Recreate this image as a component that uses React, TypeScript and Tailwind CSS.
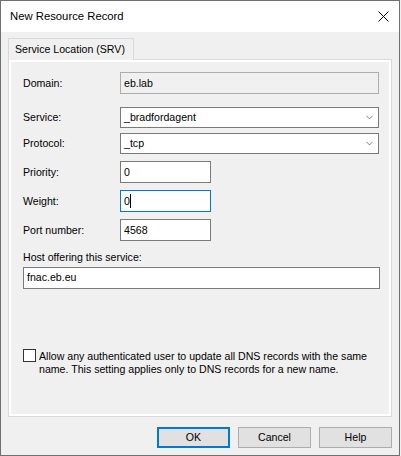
import { ChevronDown } from 'lucide-react';

const font = { fontFamily: '"Liberation Sans", Arial, sans-serif' };

function Edit({ value, width, focused, readOnly, caret }: { value: string; width: string; focused?: boolean; readOnly?: boolean; caret?: boolean }) {
  return (
    <div
      className={`h-[22px] ${width} border flex items-center pl-[3px] ${
        focused ? 'border-[#0078d7]' : 'border-[#7a7a7a]'
      } ${readOnly ? 'bg-[#f0f0f0] border-[#adadad]' : 'bg-white'}`}
    >
      <span>{value}</span>
      {caret && <span className="w-px h-[14px] bg-black" />}
    </div>
  );
}

function Combo({ value }: { value: string }) {
  return (
    <div className="h-[21px] w-[259px] border border-[#7a7a7a] bg-white flex items-center justify-between pl-[3px] pr-[3px]">
      <span>{value}</span>
      <ChevronDown className="w-[11px] h-[11px] text-[#444]" strokeWidth={1.5} />
    </div>
  );
}

function Row({ label, children, className }: { label: string; children: React.ReactNode; className?: string }) {
  return (
    <div className={`flex items-center ${className ?? ''}`}>
      <span className="w-[97px]">{label}</span>
      {children}
    </div>
  );
}

function Button({ label, primary }: { label: string; primary?: boolean }) {
  return (
    <div
      className={`w-[73px] h-[21px] flex items-center justify-center bg-[#e1e1e1] ${
        primary ? 'border-2 border-[#0078d7]' : 'border border-[#adadad]'
      }`}
    >
      {label}
    </div>
  );
}

export default function App() {
  return (
    <div className="w-[401px] h-[456px] bg-[#f0f0f0] text-[10.6px] text-black leading-none" style={font}>
      <div className="w-[400px] h-[456px] border border-[#707070] flex flex-col bg-[#f0f0f0]">
        <div className="h-[31px] bg-white flex items-center justify-between pl-[9px] pr-[10px] text-[11.3px]">
          <span>New Resource Record</span>
          <svg width="11" height="11" viewBox="0 0 11 11" className="text-black">
            <path d="M0.5 0.5 L10.5 10.5 M10.5 0.5 L0.5 10.5" stroke="currentColor" strokeWidth="1" />
          </svg>
        </div>

        <div className="px-[7px] pt-[6px] flex flex-col">
          <div className="w-[126px] h-[22px] border border-b-0 border-[#d9d9d9] bg-[#f0f0f0] flex items-center pl-[6px] -mb-px relative z-10">
            Service Location (SRV)
          </div>
          <div className="h-[358px] w-[384px] border border-[#d9d9d9] flex">
            <div className="flex-1 border-2 border-white flex flex-col pl-[12px]">
              <Row label="Domain:" className="mt-[10px]">
                <Edit value="eb.lab" width="w-[259px]" readOnly />
              </Row>
              <Row label="Service:" className="mt-[13px]">
                <Combo value="_bradfordagent" />
              </Row>
              <Row label="Protocol:" className="mt-[5px]">
                <Combo value="_tcp" />
              </Row>
              <Row label="Priority:" className="mt-[7px]">
                <Edit value="0" width="w-[91px]" />
              </Row>
              <Row label="Weight:" className="mt-[7px]">
                <Edit value="0" width="w-[91px]" focused caret />
              </Row>
              <Row label="Port number:" className="mt-[7px]">
                <Edit value="4568" width="w-[91px]" />
              </Row>
              <span className="mt-[11px]">Host offering this service:</span>
              <div className="mt-[4px]">
                <Edit value="fnac.eb.eu" width="w-[357px]" />
              </div>
              <div className="mt-[60px] flex items-start gap-[3px]">
                <div className="w-[13px] h-[13px] border border-[#333] bg-white shrink-0" />
                <span className="leading-[13px] pt-px">
                  Allow any authenticated user to update all DNS records with the same
                  <br />
                  name. This setting applies only to DNS records for a new name.
                </span>
              </div>
            </div>
          </div>
          <div className="flex justify-end gap-[8px] mt-[10px]">
            <Button label="OK" primary />
            <Button label="Cancel" />
            <Button label="Help" />
          </div>
        </div>
      </div>
    </div>
  );
}
